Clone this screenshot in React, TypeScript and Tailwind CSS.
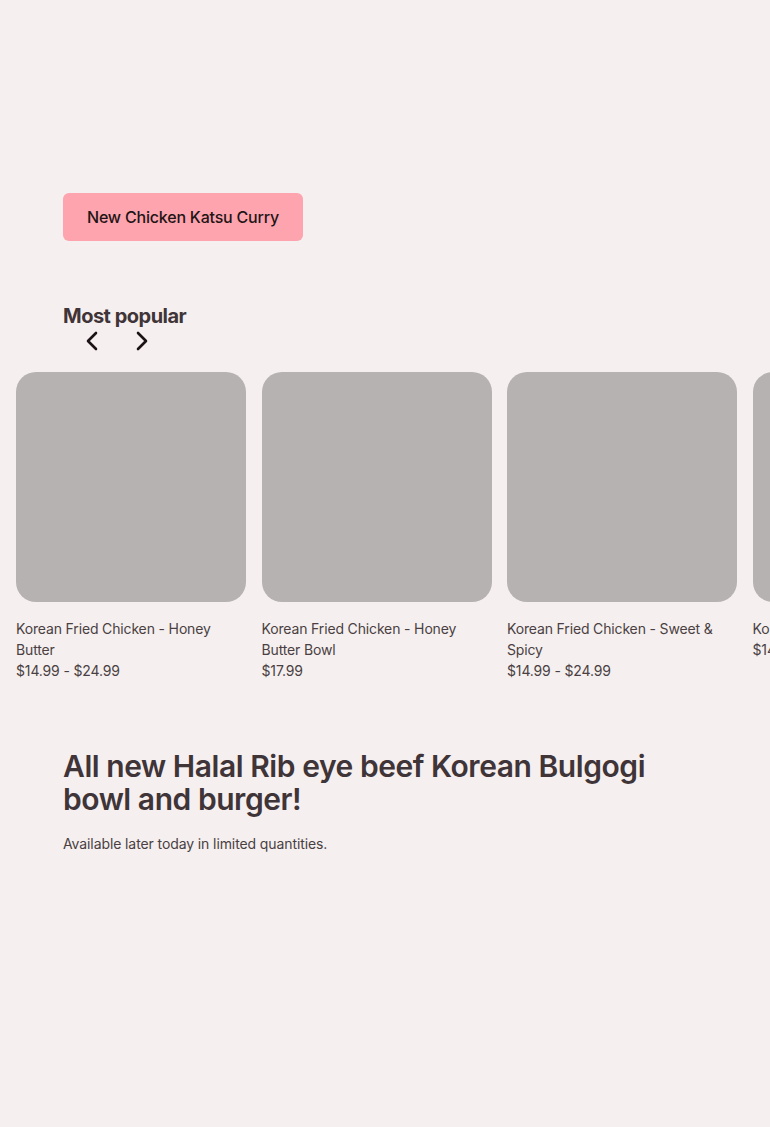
const items = [
  { name: 'Korean Fried Chicken - Honey Butter', price: '$14.99 - $24.99' },
  { name: 'Korean Fried Chicken - Honey Butter Bowl', price: '$17.99' },
  { name: 'Korean Fried Chicken - Sweet & Spicy', price: '$14.99 - $24.99' },
  { name: 'Korean Fried Chicken - Original', price: '$14.99 - $24.99' },
];

function Chevron({ dir }: { dir: 'left' | 'right' }) {
  return (
    <svg width="14" height="20" viewBox="0 0 14 20" fill="none" stroke="currentColor" strokeWidth="2.6" strokeLinecap="round" strokeLinejoin="round">
      <polyline points={dir === 'left' ? '11,2 3,10 11,18' : '3,2 11,10 3,18'} />
    </svg>
  );
}

export default function App() {
  return (
    <div className="min-h-[1127px] w-[770px] overflow-hidden bg-[#f5efef] font-['Inter',sans-serif] text-[#3f3437]">
      <div className="px-[63px] pt-[193px]">
        <button
          type="button"
          className="h-[48px] rounded-md bg-[#fda4ae] px-6 text-base font-medium tracking-[-0.2px] text-[#1f1416]"
        >
          New Chicken Katsu Curry
        </button>
      </div>

      <section className="pt-[63px]">
        <div className="px-[63px]">
          <h2 className="text-[20px] font-bold leading-6 tracking-[-0.5px]">Most popular</h2>
          <div className="mt-[3px] flex items-center gap-[36px] pl-[22px] text-[#1a1214]">
            <Chevron dir="left" />
            <Chevron dir="right" />
          </div>
        </div>

        <div className="mt-[21px] flex gap-[15.5px] pl-4">
          {items.map((it) => (
            <div key={it.name} className="w-[230px] shrink-0">
              <div className="h-[230px] w-[230px] rounded-[20px] bg-[#b6b2b1]" />
              <div className="mt-[16px] pr-2 text-sm leading-[21px] tracking-[-0.15px] text-[#4a3f42]">
                <p>{it.name}</p>
                <p>{it.price}</p>
              </div>
            </div>
          ))}
        </div>
      </section>

      <section className="px-[63px] pt-[69px]">
        <h1 className="max-w-[600px] text-[30px] font-semibold leading-[33px] tracking-[-0.45px]">
          All new Halal Rib eye beef Korean Bulgogi bowl and burger!
        </h1>
        <p className="mt-[18px] text-sm leading-5 tracking-[-0.1px] text-[#4a3f42]">
          Available later today in limited quantities.
        </p>
      </section>
    </div>
  );
}
